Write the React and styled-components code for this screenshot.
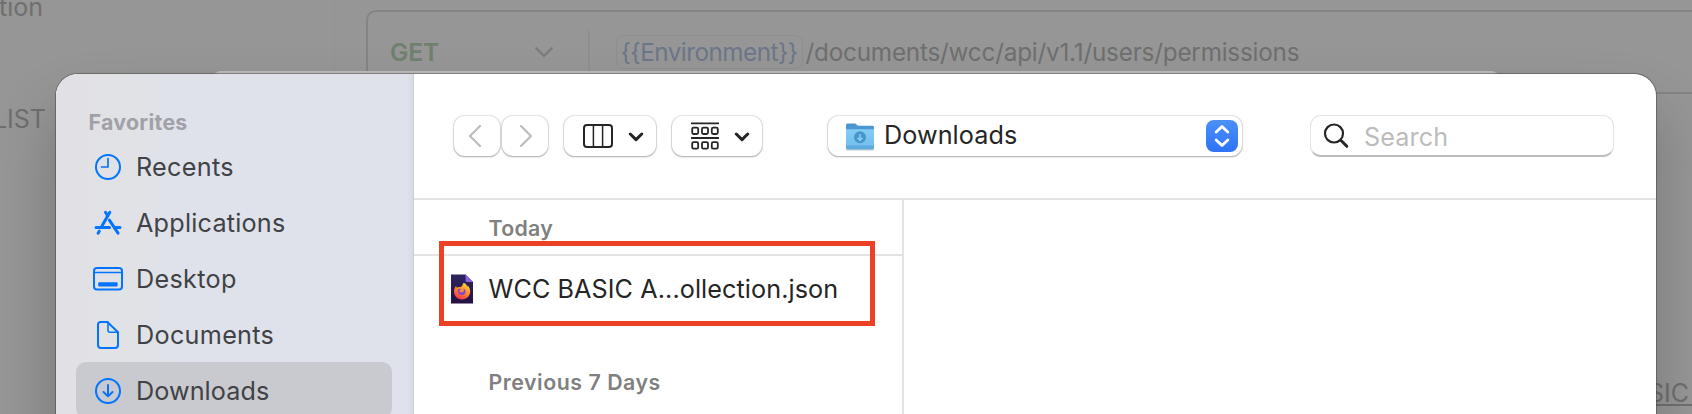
import React from "react";
import styled, { createGlobalStyle } from "styled-components";

const GlobalStyle = createGlobalStyle`
  *, *::before, *::after { box-sizing: border-box; }
  body {
    margin: 0;
    overflow: hidden;
    font-family: Inter, "Liberation Sans", sans-serif;
  }
  svg { display: block; flex: none; }
`;

const Screen = styled.div`
  position: relative;
  width: 1692px;
  height: 414px;
  overflow: hidden;
  background: #969696;
`;

/* ---------- dimmed page ---------- */

const Page = styled.div`
  display: flex;
  height: 100%;
  color: #6f6f6f;
`;

const PageNav = styled.div`
  width: 335px;
  height: 100%;
  border-right: 1px solid #929292;
  display: flex;
  flex-direction: column;
  font-size: 25px;
  line-height: 30px;
`;

const NavText = styled.div`
  width: ${(p) => p.$width}px;
  margin-top: ${(p) => p.$top}px;
  display: flex;
  justify-content: flex-end;
  white-space: nowrap;
`;

const PageBody = styled.div`
  flex: 1;
  padding: 10px 0 0 31px;
`;

const RequestBar = styled.div`
  height: 84px;
  display: flex;
  align-items: center;
  border: 2px solid #848484;
  border-right: 0;
  border-radius: 10px 0 0 10px;
  padding: 0 0 1px 22px;
`;

const Method = styled.div`
  width: 144px;
  font-size: 24.5px;
  font-weight: 600;
  color: #6f806f;
  letter-spacing: ${(p) => p.$spacing}px;
`;

const MethodDivider = styled.div`
  width: 2px;
  height: 46px;
  margin: 3px 26px 0 34px;
  background: #8f8f8f;
`;

const Variable = styled.div`
  height: 34px;
  width: 187px;
  padding-left: 3.5px;
  border: 1px solid #8f8f8f;
  border-radius: 8px;
  line-height: 32px;
  font-size: 24.3px;
  white-space: nowrap;
  color: #6c7689;
  letter-spacing: ${(p) => p.$spacing}px;
`;

const Path = styled.div`
  margin-left: 2.5px;
  font-size: 24.3px;
  white-space: nowrap;
  letter-spacing: ${(p) => p.$spacing}px;
`;

const ResponseArea = styled.div`
  display: flex;
  justify-content: flex-end;
  height: 240px;
  margin-top: 80px;
  padding: 202px 0 0;
  background: rgba(255, 255, 255, 0.015);
`;

const LinkText = styled.div`
  height: 30px;
  padding-right: 3px;
  border-bottom: 2px solid #707070;
  font-size: 25px;
  line-height: 34px;
`;

/* ---------- file dialog ---------- */

const BackSheet = styled.div`
  position: absolute;
  left: 213px;
  top: 71px;
  width: 1286px;
  height: 60px;
  border-radius: 8px 8px 0 0;
  background: #bcb9bb;
`;

const Dialog = styled.div`
  position: absolute;
  left: 56px;
  top: 74px;
  width: 1600px;
  height: 500px;
  display: flex;
  overflow: hidden;
  border-radius: 22px;
  background: #fff;
`;

const DialogShadow = styled.div`
  position: absolute;
  left: 56px;
  top: 74px;
  width: 1600px;
  height: 500px;
  border-radius: 22px;
  box-shadow: 0 0 0 1px rgba(60, 60, 60, 0.4), 0 0 2px rgba(0, 0, 0, 0.2),
    0 36px 60px rgba(0, 0, 0, 0.22);
`;

const Sidebar = styled.div`
  width: 358px;
  padding: 30px 22px 0 20px;
  background: linear-gradient(90deg, #e1e1e5 0%, #e1e2e6 20%, #dfe2ea 32%, #dfe2ea 98%, #d8dbe2 99.5%, #c8cacf 100%);
`;

const SidebarHeading = styled.div`
  height: 34px;
  padding: 0 0 0 12.5px;
  line-height: 36px;
  font-size: 21.3px;
  font-weight: 700;
  color: #a0a1a7;
  letter-spacing: ${(p) => p.$spacing}px;
`;

const Place = styled.div`
  height: 56px;
  display: flex;
  align-items: center;
  padding: 2px 0 0 16px;
  border-radius: 10px;
  background: ${(p) => (p.$active ? "#c9cacf" : "transparent")};
  color: #414245;
  font-size: 25.2px;
  white-space: nowrap;
`;

const PlaceIcon = styled.span`
  width: 32px;
  display: flex;
  justify-content: center;
  margin-right: 12px;
`;

const PlaceName = styled.span`
  letter-spacing: ${(p) => p.$spacing}px;
`;

const Main = styled.div`
  flex: 1;
  display: flex;
  flex-direction: column;
`;

const Toolbar = styled.div`
  height: 126px;
  padding: 42px 42px 0 40px;
  display: flex;
  align-items: flex-start;
  border-bottom: 2px solid #e3e3e3;
`;

const Control = styled.div`
  width: ${(p) => p.$width}px;
  height: ${(p) => p.$height || 40}px;
  margin-right: ${(p) => p.$gap || 0}px;
  padding-left: ${(p) => p.$inset || 0}px;
  display: flex;
  align-items: center;
  border-radius: 11px;
  background: #fff;
  box-shadow: 0 0 1px 0.5px rgba(0, 0, 0, 0.1), 0 1px 2px rgba(0, 0, 0, 0.26);
`;

const SearchField = styled(Control)`
  margin-top: -1px;
  border: 1px solid #e4e4e4;
  border-bottom: 2px solid #bdbdbd;
  box-shadow: none;
  font-size: 25.2px;
  color: #bcbcbc;
`;

const ControlIcon = styled.span`
  margin-right: ${(p) => p.$gap}px;
  padding-top: ${(p) => p.$drop || 0}px;
`;

const FolderName = styled.span`
  flex: 1;
  padding-bottom: 2px;
  font-size: 25.2px;
  color: #252525;
  letter-spacing: ${(p) => p.$spacing}px;
`;

const Stepper = styled.span`
  width: 32px;
  height: 32px;
  margin-right: 4px;
  display: flex;
  align-items: center;
  justify-content: center;
  border-radius: 8px;
  background: linear-gradient(#4a90f8, #2f73f5);
`;

const SearchText = styled.span`
  padding-top: 2px;
  letter-spacing: ${(p) => p.$spacing}px;
`;

const Browser = styled.div`
  flex: 1;
  display: flex;
`;

const FileColumn = styled.div`
  width: 490px;
  border-right: 2px solid #e3e3e3;
`;

const GroupHeading = styled.div`
  height: 56px;
  margin-top: ${(p) => p.$top || 0}px;
  padding: 1px 0 0 74.5px;
  line-height: 54px;
  border-bottom: ${(p) => (p.$ruled ? "2px solid #e3e3e3" : "0")};
  font-size: 21.3px;
  font-weight: 600;
  color: #808080;
  letter-spacing: ${(p) => p.$spacing}px;
`;

const FileRow = styled.div`
  height: 64px;
  display: flex;
  align-items: center;
  padding: 1px 0 0 37px;
  font-size: 25.2px;
  color: #252525;
  white-space: nowrap;
`;

const FileName = styled.span`
  margin-left: 15.5px;
  letter-spacing: ${(p) => p.$spacing}px;
`;

const Highlight = styled.div`
  position: absolute;
  left: 439px;
  top: 241px;
  width: 436px;
  height: 85px;
  border: 5px solid #ed4126;
`;

/* ---------- drawings ---------- */

const blue = { fill: "none", stroke: "#0274ff", strokeWidth: 2, strokeLinecap: "round", strokeLinejoin: "round" };

const ClockIcon = () => (
  <svg width="28" height="28" viewBox="0 0 28 28" {...blue}>
    <circle cx="14" cy="14" r="12" />
    <path d="M14 5.5V14H7.5" strokeWidth="1.7" />
  </svg>
);

const AppsIcon = () => (
  <svg width="28" height="28" viewBox="0 0 28 28" {...blue} strokeWidth="3">
    <path d="M11.5 3.2l1.7 2.9M15.8 3.2L7.8 17.2M2 18.4h13.5M20.8 18.4h5.2M15.4 11.2l8.6 13M5.3 22.2l-1.2 2" />
  </svg>
);

const DesktopIcon = () => (
  <svg width="32" height="28" viewBox="0 0 32 28" {...blue}>
    <rect x="2" y="3" width="28" height="21.6" rx="3" />
    <path d="M2.5 7.6h27" strokeWidth="1.5" />
    <rect x="6.2" y="17.2" width="19.4" height="4.2" rx="1" fill="#0274ff" stroke="none" />
  </svg>
);

const DocumentIcon = () => (
  <svg width="28" height="30" viewBox="0 0 28 30" {...blue}>
    <path d="M6.2 2h7.2L24 12.2V25a3 3 0 0 1-3 3H7a3 3 0 0 1-3-3V4.6A2.6 2.6 0 0 1 6.2 2z" />
    <path d="M14 2.4v8.2a1.6 1.6 0 0 0 1.6 1.6h8" strokeWidth="1.6" />
  </svg>
);

const DownloadIcon = () => (
  <svg width="28" height="28" viewBox="0 0 28 28" {...blue}>
    <circle cx="14" cy="14" r="12" />
    <path d="M14 8v11.2M9.5 15l4.5 4.4 4.5-4.4" />
  </svg>
);

const ArrowIcon = ({ d }) => (
  <svg width="14" height="24" viewBox="0 0 14 24" fill="none" stroke="#bdbdbd" strokeWidth="2.2" strokeLinecap="round" strokeLinejoin="round">
    <path d={d} />
  </svg>
);

const ColumnsIcon = () => (
  <svg width="30" height="24" viewBox="0 0 30 24" fill="none" stroke="#252525" strokeWidth="2">
    <rect x="1" y="1" width="28" height="22" rx="3" />
    <path d="M10.4 1v22M19.6 1v22" strokeWidth="1.5" />
  </svg>
);

const GroupIcon = () => (
  <svg width="28" height="28" viewBox="0 0 28 28" fill="none" stroke="#252525" strokeWidth="1.8">
    <path d="M0.5 1.3h27M0.5 16h27" strokeLinecap="round" />
    {[1.2, 11, 20.8].map((x) => (
      <React.Fragment key={x}>
        <rect x={x} y="5.6" width="6" height="6.4" rx="1.4" />
        <rect x={x} y="20.2" width="6" height="6.4" rx="1.4" />
      </React.Fragment>
    ))}
  </svg>
);

const MenuChevron = () => (
  <svg width="16" height="10" viewBox="0 0 16 10" fill="none" stroke="#252525" strokeWidth="3" strokeLinecap="round" strokeLinejoin="round">
    <path d="M2.3 2L8 7.6 13.7 2" />
  </svg>
);

const MethodChevron = () => (
  <svg width="20" height="12" viewBox="0 0 20 12" fill="none" stroke="#7a7a7a" strokeWidth="2">
    <path d="M1.5 1.5L10 10l8.5-8.5" />
  </svg>
);

const FolderIcon = () => (
  <svg width="30" height="28" viewBox="0 0 30 28">
    <defs>
      <linearGradient id="folder" x1="0" y1="0" x2="0" y2="1">
        <stop offset="0" stopColor="#86ccf5" />
        <stop offset="1" stopColor="#6fbdec" />
      </linearGradient>
    </defs>
    <rect x="1" y="24.5" width="28" height="3" rx="1.5" fill="#c9c9c9" />
    <path d="M1 2a1.5 1.5 0 0 1 1.5-1.5h7.2c1.5 0 2 2.2 3.6 2.200H27.500A1.5 1.5 0 0 1 29 4.200V12H1z" fill="#4a98cf" />
    <path d="M1 6.2h28v18.6a1.5 1.5 0 0 1-1.5 1.5h-25A1.5 1.5 0 0 1 1 24.8z" fill="url(#folder)" />
    <path d="M1 22.6h28v2.2a1.5 1.5 0 0 1-1.5 1.5h-25A1.5 1.5 0 0 1 1 24.8z" fill="#5cacdf" />
    <circle cx="15" cy="14.3" r="6" fill="#4795c9" />
    <path d="M15 11v6M12.5 14.8l2.5 2.5 2.5-2.5" fill="none" stroke="#86ccf5" strokeWidth="1.6" />
  </svg>
);

const StepperIcon = () => (
  <svg width="16" height="24" viewBox="0 0 16 24" fill="none" stroke="#fff" strokeWidth="2.8" strokeLinecap="round" strokeLinejoin="round">
    <path d="M2.2 8L8 2.4 13.8 8M2.2 16L8 21.6l5.8-5.6" />
  </svg>
);

const SearchIcon = () => (
  <svg width="26" height="26" viewBox="0 0 26 26" fill="none" stroke="#252525" strokeLinecap="round">
    <circle cx="11" cy="10.5" r="9" strokeWidth="2.2" />
    <path d="M17.8 17.3l6 6" strokeWidth="3" />
  </svg>
);

const FirefoxFileIcon = () => (
  <svg width="22" height="30" viewBox="0 0 22 30">
    <defs>
      <linearGradient id="paper" x1="0" y1="0" x2="0" y2="1">
        <stop offset="0" stopColor="#2e2560" />
        <stop offset="1" stopColor="#231040" />
      </linearGradient>
      <linearGradient id="flame" x1="0.8" y1="0" x2="0.3" y2="1">
        <stop offset="0" stopColor="#ffdc3e" />
        <stop offset="0.5" stopColor="#ff8a2b" />
        <stop offset="1" stopColor="#f2304f" />
      </linearGradient>
    </defs>
    <path d="M0 .5h14.5L22 8v21.5H0z" fill="url(#paper)" />
    <path d="M14.5.5L22 8h-6a1.5 1.5 0 0 1-1.5-1.5z" fill="#8a63dc" />
    <path d="M12.6 8.8c2.3 1 3.3 2.5 3.7 4 .3-.4.3-1 .2-1.6 2 1.9 2.7 4.200 2.7 6.100 0 4.800-3.600 8.200-8.100 8.200s-8.100-3.500-8.100-8c0-2.800 1.300-4.600 2.100-5.700.1 1 .4 1.500.8 1.900 1-.9 2-1 3.100-.5 1.200-.3 2-1 2.400-1.900.4-1 .6-1.700 1.200-2.500z" fill="url(#flame)" />
    <path d="M7.2 15.2c1-.9 2.2-.4 3-.1-.5.7-1.200 1-1.900 1.300-.4 1.200.8 2.300 2.200 2.200 1.500 0 2.300-1 2.400-2 .1-1-.3-1.800-.9-2.300 2.300.5 3 3 2.200 4.700-1 2-3.700 2.600-5.700 1.200-1.500-1.200-2-3.200-1.300-5z" fill="#7546dd" />
  </svg>
);

const places = [
  { name: "Recents", Icon: ClockIcon, spacing: 0.28 },
  { name: "Applications", Icon: AppsIcon, spacing: 0.22 },
  { name: "Desktop", Icon: DesktopIcon, spacing: 0.3 },
  { name: "Documents", Icon: DocumentIcon, spacing: 0.3 },
  { name: "Downloads", Icon: DownloadIcon, spacing: 0.07, active: true },
];

export default function App() {
  return (
    <Screen>
      <GlobalStyle />
      <Page>
        <PageNav>
          <NavText $width={43} $top={-8}>tion</NavText>
          <NavText $width={46} $top={82}>LIST</NavText>
        </PageNav>
        <PageBody>
          <RequestBar>
            <Method $spacing={-0.1}>GET</Method>
            <MethodChevron />
            <MethodDivider />
            <Variable $spacing={-0.53}>{"{{Environment}}"}</Variable>
            <Path $spacing={-0.22}>/documents/wcc/api/v1.1/users/permissions</Path>
          </RequestBar>
          <ResponseArea>
            <LinkText>BASIC</LinkText>
          </ResponseArea>
        </PageBody>
      </Page>

      <BackSheet />
      <DialogShadow />
      <Dialog>
        <Sidebar>
          <SidebarHeading $spacing={0.3}>Favorites</SidebarHeading>
          {places.map(({ name, Icon, spacing, active }) => (
            <Place key={name} $active={active}>
              <PlaceIcon><Icon /></PlaceIcon>
              <PlaceName $spacing={spacing}>{name}</PlaceName>
            </Place>
          ))}
        </Sidebar>
        <Main>
          <Toolbar>
            <Control $width={46} $gap={2} $inset={14}>
              <ArrowIcon d="M12 2L2 12l10 10" />
            </Control>
            <Control $width={46} $gap={16} $inset={17}>
              <ArrowIcon d="M2 2l10 10L2 22" />
            </Control>
            <Control $width={92} $gap={16} $inset={19}>
              <ControlIcon $gap={15}><ColumnsIcon /></ControlIcon>
              <ControlIcon $drop={2}><MenuChevron /></ControlIcon>
            </Control>
            <Control $width={90} $gap={66} $inset={19}>
              <ControlIcon $gap={15}><GroupIcon /></ControlIcon>
              <ControlIcon $drop={2}><MenuChevron /></ControlIcon>
            </Control>
            <Control $width={414} $gap={68} $inset={17}>
              <ControlIcon $gap={9} $drop={1}><FolderIcon /></ControlIcon>
              <FolderName $spacing={0.07}>Downloads</FolderName>
              <Stepper><StepperIcon /></Stepper>
            </Control>
            <SearchField $width={304} $height={42} $inset={12}>
              <ControlIcon $gap={15} $drop={1}><SearchIcon /></ControlIcon>
              <SearchText $spacing={0.1}>Search</SearchText>
            </SearchField>
          </Toolbar>
          <Browser>
            <FileColumn>
              <GroupHeading $ruled $spacing={0.3}>Today</GroupHeading>
              <FileRow>
                <FirefoxFileIcon />
                <FileName $spacing={0.08}>WCC BASIC A...ollection.json</FileName>
              </FileRow>
              <GroupHeading $top={34} $spacing={0.54}>Previous 7 Days</GroupHeading>
            </FileColumn>
          </Browser>
        </Main>
      </Dialog>
      <Highlight />
    </Screen>
  );
}
